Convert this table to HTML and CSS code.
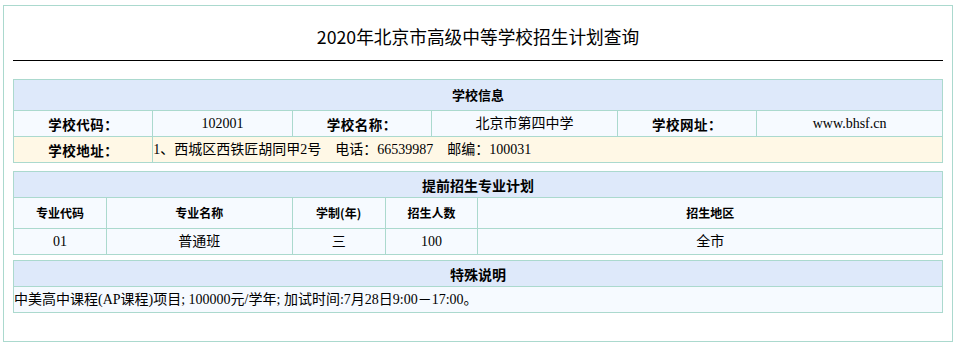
FILE: index.html
```html
<!DOCTYPE html>
<html lang="zh-CN">
<head>
<meta charset="utf-8">
<title>2020年北京市高级中等学校招生计划查询</title>
<link rel="stylesheet" href="styles.css">
</head>
<body>
<div class="page">
  <div class="title">2020年北京市高级中等学校招生计划查询</div>
  <div class="rule"></div>

  <table class="grid t1">
    <colgroup>
      <col class="c15"><col class="c15"><col class="c15"><col class="c20"><col class="c15"><col class="c20">
    </colgroup>
    <tr class="head tall"><td colspan="6" class="sec sec13">学校信息</td></tr>
    <tr class="row">
      <td class="lbl">学校代码：</td><td>102001</td>
      <td class="lbl">学校名称：</td><td>北京市第四中学</td>
      <td class="lbl">学校网址：</td><td>www.bhsf.cn</td>
    </tr>
    <tr class="row addr">
      <td class="lbl">学校地址：</td>
      <td colspan="5" class="left">1、西城区西铁匠胡同甲2号　电话：66539987　邮编：100031</td>
    </tr>
  </table>

  <table class="grid t2">
    <colgroup>
      <col class="c10"><col class="c20"><col class="c10"><col class="c10"><col class="c50">
    </colgroup>
    <tr class="head"><td colspan="5" class="sec">提前招生专业计划</td></tr>
    <tr class="row tall">
      <td class="th">专业代码</td><td class="th">专业名称</td><td class="th">学制(年)</td><td class="th">招生人数</td><td class="th">招生地区</td>
    </tr>
    <tr class="row">
      <td>01</td><td>普通班</td><td>三</td><td>100</td><td>全市</td>
    </tr>
  </table>

  <table class="grid t3">
    <tr class="head"><td class="sec">特殊说明</td></tr>
    <tr class="row"><td class="left">中美高中课程(AP课程)项目; 100000元/学年; 加试时间:7月28日9:00－17:00。</td></tr>
  </table>
</div>
</body>
</html>
```

FILE: styles.css
```css
body {
  margin: 0;
  background: #ffffff;
  color: #000000;
  font-family: "Liberation Serif", "Noto Sans CJK SC", serif;
  font-size: 14px;
}

.page {
  box-sizing: border-box;
  width: 950px;
  height: 337px;
  margin: 5px 0 0 3px;
  padding: 0 9px;
  border: 1px solid #abd9ce;
}

.title {
  font-family: "Noto Sans CJK SC", sans-serif;
  font-size: 17.7px;
  line-height: 24px;
  height: 24px;
  padding-top: 18px;
  margin-bottom: 12px;
  text-align: center;
}

.rule {
  height: 0;
  border-top: 1px solid #000000;
  margin-bottom: 18px;
}

.grid {
  width: 930px;
  border-collapse: collapse;
  table-layout: fixed;
}

.grid td {
  border: 1px solid #abd9ce;
  padding: 0;
  text-align: center;
  vertical-align: middle;
  white-space: nowrap;
  overflow: hidden;
  height: 25px;
  line-height: 20px;
}

.grid .tall td {
  height: 30px;
}

.t1 { margin-bottom: 8px; }
.t2 { margin-bottom: 5px; }

.c10 { width: 10%; }
.c15 { width: 15%; }
.c20 { width: 20%; }
.c50 { width: 50%; }

.head td { background: #dee9fa; }
.row td { background: #f6faff; }
.addr td { background: #fff8e6; }

.sec {
  font-family: "Noto Sans CJK SC", sans-serif;
  font-weight: bold;
  font-size: 14px;
}
.sec13 { font-size: 13px; }

.lbl {
  font-family: "Noto Sans CJK SC", sans-serif;
  font-weight: bold;
  font-size: 13.5px;
  letter-spacing: 0.5px;
}

.th {
  font-family: "Noto Sans CJK SC", sans-serif;
  font-weight: bold;
  font-size: 12px;
}

.grid td.left { text-align: left; }
```
